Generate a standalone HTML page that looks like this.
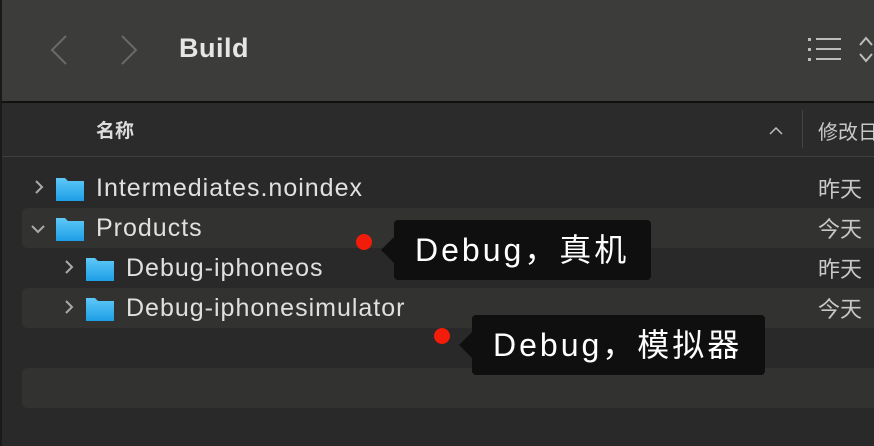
<!DOCTYPE html>
<html><head><meta charset="utf-8"><style>
*{margin:0;padding:0;box-sizing:border-box}
body{width:874px;height:446px;overflow:hidden;background:#282928;font-family:"Liberation Sans","Noto Sans CJK SC",sans-serif;position:relative;color:#dcdcdc}
.tb{position:absolute;left:0;top:0;width:874px;height:101px;background:#3c3d3b}
.edge{position:absolute;left:0;top:0;width:2px;height:446px;background:#1a1a1a}
.line{position:absolute;left:0;top:101px;width:874px;height:2px;background:#111}
.hdr{position:absolute;left:0;top:103px;width:874px;height:53px;background:#2a2b2a}
.hl{position:absolute;left:0;top:156px;width:874px;height:1px;background:#3d3e3d}
.stripe{position:absolute;left:22px;width:860px;height:40px;background:#323331;border-radius:6px}
.t{position:absolute;white-space:nowrap}
.name{font-size:25px;letter-spacing:1px;color:#e0e0e0}
.date{font-size:22px;color:#c8c8c8}
.tip{position:absolute;background:#0f0f0f;border-radius:4px;color:#fff;font-size:32px;letter-spacing:3px;height:60px;line-height:60px;padding-left:21px}
.tip:before{content:"";position:absolute;left:-13px;top:17px;border-style:solid;border-width:13px 13px 13px 0;border-color:transparent #0f0f0f transparent transparent}
.dot{position:absolute;width:16px;height:16px;border-radius:50%;background:#f21c0a}
</style></head><body>
<div class="tb"></div>
<div class="line"></div>
<div class="hdr"></div>
<div class="hl"></div>
<div class="edge"></div>
<svg style="position:absolute;left:0;top:0" width="874" height="160">
<path d="M66 36 L52 50 L66 64" stroke="#6a6b69" stroke-width="2" fill="none"/>
<path d="M122 36 L136 50 L122 64" stroke="#6a6b69" stroke-width="2" fill="none"/>
<g fill="#bdbdbd"><rect x="808" y="38" width="3" height="3"/><rect x="808" y="48" width="3" height="3"/><rect x="808" y="58" width="3" height="3"/>
<rect x="816" y="38" width="25" height="2"/><rect x="816" y="48" width="25" height="2"/><rect x="816" y="58" width="25" height="2"/></g>
<path d="M860 45 L866 38 L872 45 M860 54 L866 61 L872 54" stroke="#bdbdbd" stroke-width="2" fill="none"/>
<path d="M770 134 L776 128 L782 134" stroke="#bdbdbd" stroke-width="1.5" fill="none"/>
<rect x="802" y="110" width="1" height="38" fill="#444"/>
</svg>
<div class="t" style="left:179px;top:33px;font-size:27px;font-weight:bold;letter-spacing:0.5px;color:#e6e6e6">Build</div>
<div class="t" style="left:96px;top:116px;font-size:19px;font-weight:bold;color:#dcdcdc">名称</div>
<div class="t" style="left:818px;top:116px;font-size:20px;color:#c8c8c8">修改日</div>
<div class="stripe" style="top:208px"></div>
<div class="stripe" style="top:288px"></div>
<div class="stripe" style="top:368px"></div>
<svg style="position:absolute;left:0;top:160px" width="200" height="170">
<defs><linearGradient id="g" x1="0" y1="0" x2="0" y2="1"><stop offset="0" stop-color="#5ec8f7"/><stop offset="1" stop-color="#1d9ee6"/></linearGradient></defs>
<g stroke="#aaa" stroke-width="2" fill="none">
<path d="M36 21 L42 27 L36 33"/><path d="M32 66 L38 72 L44 66"/><path d="M66 101 L72 107 L66 113"/><path d="M66 141 L72 147 L66 153"/></g>
<g fill="url(#g)">
<path d="M56 18 h9 l3 3 h16 v20 h-28z"/><path d="M56 58 h9 l3 3 h16 v20 h-28z"/><path d="M86 98 h9 l3 3 h16 v20 h-28z"/><path d="M86 138 h9 l3 3 h16 v20 h-28z"/></g>
</svg>
<div class="t name" style="left:96px;top:174px">Intermediates.noindex</div>
<div class="t name" style="left:96px;top:214px">Products</div>
<div class="t name" style="left:126px;top:254px">Debug-iphoneos</div>
<div class="t name" style="left:126px;top:294px">Debug-iphonesimulator</div>
<div class="t date" style="left:818px;top:172px">昨天</div>
<div class="t date" style="left:818px;top:212px">今天</div>
<div class="t date" style="left:818px;top:252px">昨天</div>
<div class="t date" style="left:818px;top:292px">今天</div>
<div class="dot" style="left:356px;top:234px"></div>
<div class="tip" style="left:394px;top:220px;width:257px">Debug，真机</div>
<div class="dot" style="left:434px;top:328px"></div>
<div class="tip" style="left:472px;top:315px;width:293px">Debug，模拟器</div>
</body></html>
